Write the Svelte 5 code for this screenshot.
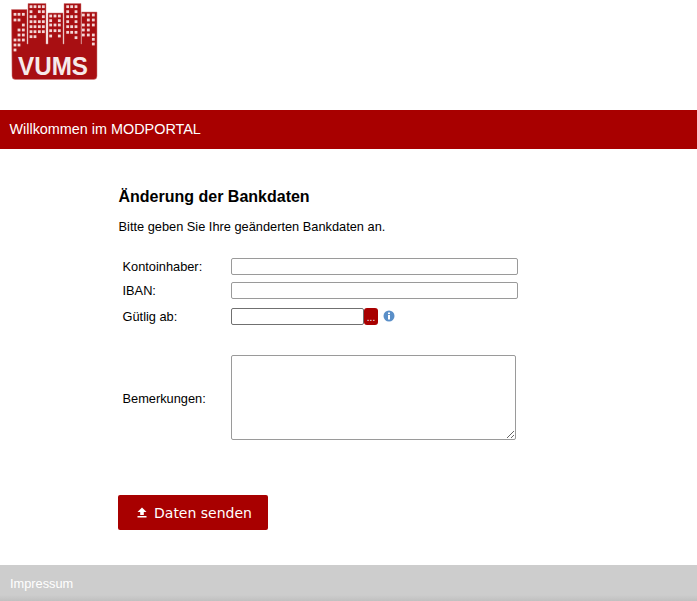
<script>
  const rows = [
    { label: 'Kontoinhaber:', id: 'k' },
    { label: 'IBAN:', id: 'i' }
  ];
  // window rows per building: [y, [x...]] in 3x reference coordinates
  const grid = [
    [43,[45,57,70]],[60,[45,57]],[75,[70]],[90,[57,70]],[105,[57,70]],[120,[45,57,70]],[135,[45,57]],[150,[45]],
    [20,[93,105,118,130]],[35,[93,118,130]],[50,[93,105,130]],[65,[93,105,118,130]],[80,[93,105,118,130]],[95,[93,105,118,130]],[110,[93,105]],
    [48,[152,165,178]],[62,[152,178]],[75,[152,165,178]],[92,[152,165,178]],[108,[152,178]],
    [20,[203,215,228]],[35,[203,228]],[50,[203,215,228]],[65,[203,228]],[80,[203,215,228]],[97,[203,215,228]],[113,[228]],
    [45,[250,265,280]],[60,[265,280]],[75,[250,265,280]],[90,[250,265]],[105,[250,265,280]],[118,[280]],[132,[280]]
  ];
  const windows = grid.flatMap(([y, xs]) => xs.map((x) => [x / 3 - 1.4, y / 3 - 1.4]));
</script>

<div class="page">
  <div class="logo-area">
    <svg class="logo" width="110" height="90" viewBox="0 0 110 90" aria-hidden="true">
      <path class="bld" d="M11.500 9.500H27V44H28V3.500H46V44H48V13H63V44H64V3.500H81V44H81.500V12H97V76q0 3.500-3.500 3.500H15.500q-3.500 0-3.500-3.500z" />
      <g class="win">
        {#each windows as w}
          <rect x={w[0]} y={w[1]} width="2.800" height="2.800" />
        {/each}
      </g>
      <text x="18" y="75" class="vums" textLength="70" lengthAdjust="spacingAndGlyphs">VUMS</text>
    </svg>
  </div>

  <header class="bar">Willkommen im MODPORTAL</header>

  <main class="content">
    <h1>Änderung der Bankdaten</h1>
    <p>Bitte geben Sie Ihre geänderten Bankdaten an.</p>

    <div class="form">
      {#each rows as r}
        <label class="row">
          <span class="lab">{r.label}</span>
          <input type="text" class="long" />
        </label>
      {/each}
      <label class="row date">
        <span class="lab">Gütlig ab:</span>
        <input type="text" class="short" />
        <button type="button" class="pick">...</button>
        <svg class="info" width="12" height="12" viewBox="0 0 12 12" aria-hidden="true">
          <circle cx="6" cy="6" r="5.500" fill="#5a8fc8" />
          <rect x="5" y="5" width="2" height="4.500" fill="#fff" />
          <rect x="5" y="2.500" width="2" height="1.600" fill="#fff" />
        </svg>
      </label>
      <label class="row notes">
        <span class="lab">Bemerkungen:</span>
        <textarea></textarea>
      </label>
    </div>

    <button type="button" class="send">
      <svg width="10" height="11" viewBox="0 0 10 11" aria-hidden="true">
        <path d="M5 0.500 9.500 5H6.800v3H3.200V5H.5zM.5 9h9v1.500h-9z" fill="#fff" />
      </svg>
      Daten senden
    </button>
  </main>

  <footer class="foot">Impressum</footer>
</div>

<style>
  :global(body) {
    margin: 0;
    background: #fff;
  }
  .page {
    display: flex;
    flex-direction: column;
    height: 601px;
    overflow: hidden;
    font-family: "Liberation Sans", Arial, sans-serif;
    font-size: 12.800px;
    color: #000;
  }
  .logo-area {
    height: 110px;
    flex: none;
  }
  .logo {
    display: block;
  }
  .bld {
    fill: #a80f12;
    stroke: #cf7c7c;
    stroke-width: 0.500;
  }
  .win rect {
    fill: #f3d6d6;
  }
  .vums {
    font: bold 26px "Liberation Sans", Arial, sans-serif;
    fill: #f6eaea;
  }
  .bar {
    flex: none;
    height: 39px;
    line-height: 39px;
    background: #a80000;
    color: #fff;
    padding-left: 9.500px;
    font-size: 14.400px;
  }
  .content {
    flex: 1;
    padding: 38px 0 0 118px;
  }
  h1 {
    margin: 0;
    padding-left: 0.500px;
    font-size: 16px;
    line-height: 20px;
    font-weight: bold;
  }
  p {
    margin: 11px 0 0;
    padding-left: 0.500px;
    line-height: 18px;
  }
  .form {
    margin-top: 22px;
    display: flex;
    flex-direction: column;
    gap: 7px;
    padding-left: 4.500px;
  }
  .row {
    display: flex;
    align-items: center;
    height: 17px;
  }
  .lab {
    width: 108.500px;
    flex: none;
    margin-top: -1px;
  }
  input {
    box-sizing: border-box;
    height: 17px;
    border: 1px solid #9a9a9a;
    border-radius: 2px;
    padding: 0 2px;
    background: #fff;
  }
  .long {
    width: 287px;
  }
  .date {
    margin-top: 2px;
  }
  .short {
    width: 133px;
    border-color: #707070;
  }
  .pick {
    width: 14px;
    height: 17px;
    padding: 0;
    border: 0;
    border-radius: 3px;
    background: #a80000;
    color: #fff;
    font: 10px/20px "Liberation Sans", Arial, sans-serif;
  }
  .info {
    margin-left: 5px;
    margin-top: -2px;
  }
  .notes {
    height: 85px;
    margin-top: 23px;
  }
  .notes .lab {
    margin-top: 1px;
  }
  textarea {
    box-sizing: border-box;
    display: block;
    width: 285px;
    height: 85px;
    border: 1px solid #9a9a9a;
    border-radius: 2px;
    padding: 2px;
    margin: 0;
  }
  .send {
    display: flex;
    align-items: center;
    justify-content: center;
    gap: 7px;
    margin-top: 55px;
    width: 150px;
    height: 35px;
    padding: 0 0 0 3px;
    border: 0;
    border-radius: 2px;
    background: #a80000;
    color: #fff;
    font: 14px "DejaVu Sans", Verdana, sans-serif;
  }
  .foot {
    flex: none;
    height: 36px;
    line-height: 38px;
    padding-left: 10px;
    background: linear-gradient(to bottom, #cdcdcd 0, #cdcdcd 30px, #c0c0c0 36px);
    color: #fff;
    font-size: 12.800px;
  }
</style>
